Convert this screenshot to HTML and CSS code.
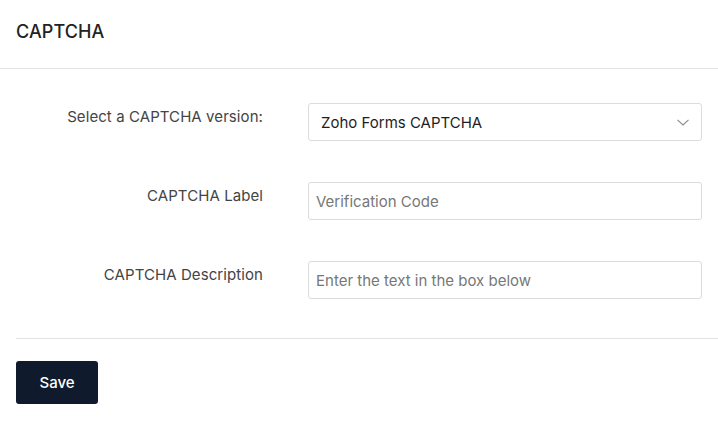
FILE: index.html
```html
<!DOCTYPE html>
<html lang="en">
<head>
<meta charset="utf-8">
<title>CAPTCHA</title>
<link rel="stylesheet" href="styles.css">
</head>
<body>
<div class="panel">
  <header class="panel-header">CAPTCHA</header>
  <div class="form-body">
    <div class="form-row">
      <label class="form-label">Select a CAPTCHA version:</label>
      <div class="select-box">
        <span class="select-value">Zoho Forms CAPTCHA</span>
        <svg class="chevron" width="12" height="7" viewBox="0 0 12 7"><path d="M0.5 0.8 L6 6 L11.5 0.8" fill="none" stroke="#8a8a8a" stroke-width="1.1"/></svg>
      </div>
    </div>
    <div class="form-row">
      <label class="form-label">CAPTCHA Label</label>
      <input class="text-input" type="text" placeholder="Verification Code">
    </div>
    <div class="form-row">
      <label class="form-label">CAPTCHA Description</label>
      <input class="text-input" type="text" placeholder="Enter the text in the box below">
    </div>
  </div>
  <div class="panel-footer">
    <button class="save-btn">Save</button>
  </div>
</div>
</body>
</html>
```

FILE: styles.css
```css
html, body {
  margin: 0;
  padding: 0;
  background: #ffffff;
}
body {
  font-family: Inter, "Noto Sans", sans-serif;
  color: #222;
}
.panel-header {
  font-size: 18px;
  font-weight: 500;
  line-height: 20px;
  letter-spacing: 0.1px;
  color: #222;
  padding: 22px 16px 26px;
  border-bottom: 1px solid #e3e3e3;
}
.form-body {
  display: grid;
  grid-template-columns: 247px 1fr;
  column-gap: 45px;
  row-gap: 41px;
  padding: 34px 16px 39px;
}
.form-row {
  display: contents;
}
.form-label {
  font-size: 15px;
  line-height: 20px;
  letter-spacing: 0.08px;
  color: #444;
  text-align: right;
  padding-top: 4px;
}
.select-box,
.text-input {
  box-sizing: border-box;
  height: 38px;
  width: 100%;
  border: 1px solid #dcdcdc;
  border-radius: 3px;
  background: #fff;
  font-family: Inter, "Noto Sans", sans-serif;
  font-size: 15px;
}
.select-box {
  display: flex;
  align-items: center;
  justify-content: space-between;
  padding: 1px 12px 0 12px;
  color: #1e1e1e;
}
.text-input {
  padding: 1px 7px 0;
  color: #222;
  outline: none;
  margin: 0;
}
.text-input::placeholder {
  color: #777;
}
.chevron {
  display: block;
}
.panel-footer {
  margin-left: 16px;
  border-top: 1px solid #e3e3e3;
  padding-top: 22px;
}
.save-btn {
  width: 82px;
  height: 43px;
  background: #0f1b2d;
  color: #fff;
  border: none;
  border-radius: 3px;
  font-family: Inter, "Noto Sans", sans-serif;
  font-size: 15px;
  font-weight: 500;
  padding: 0;
}
```
